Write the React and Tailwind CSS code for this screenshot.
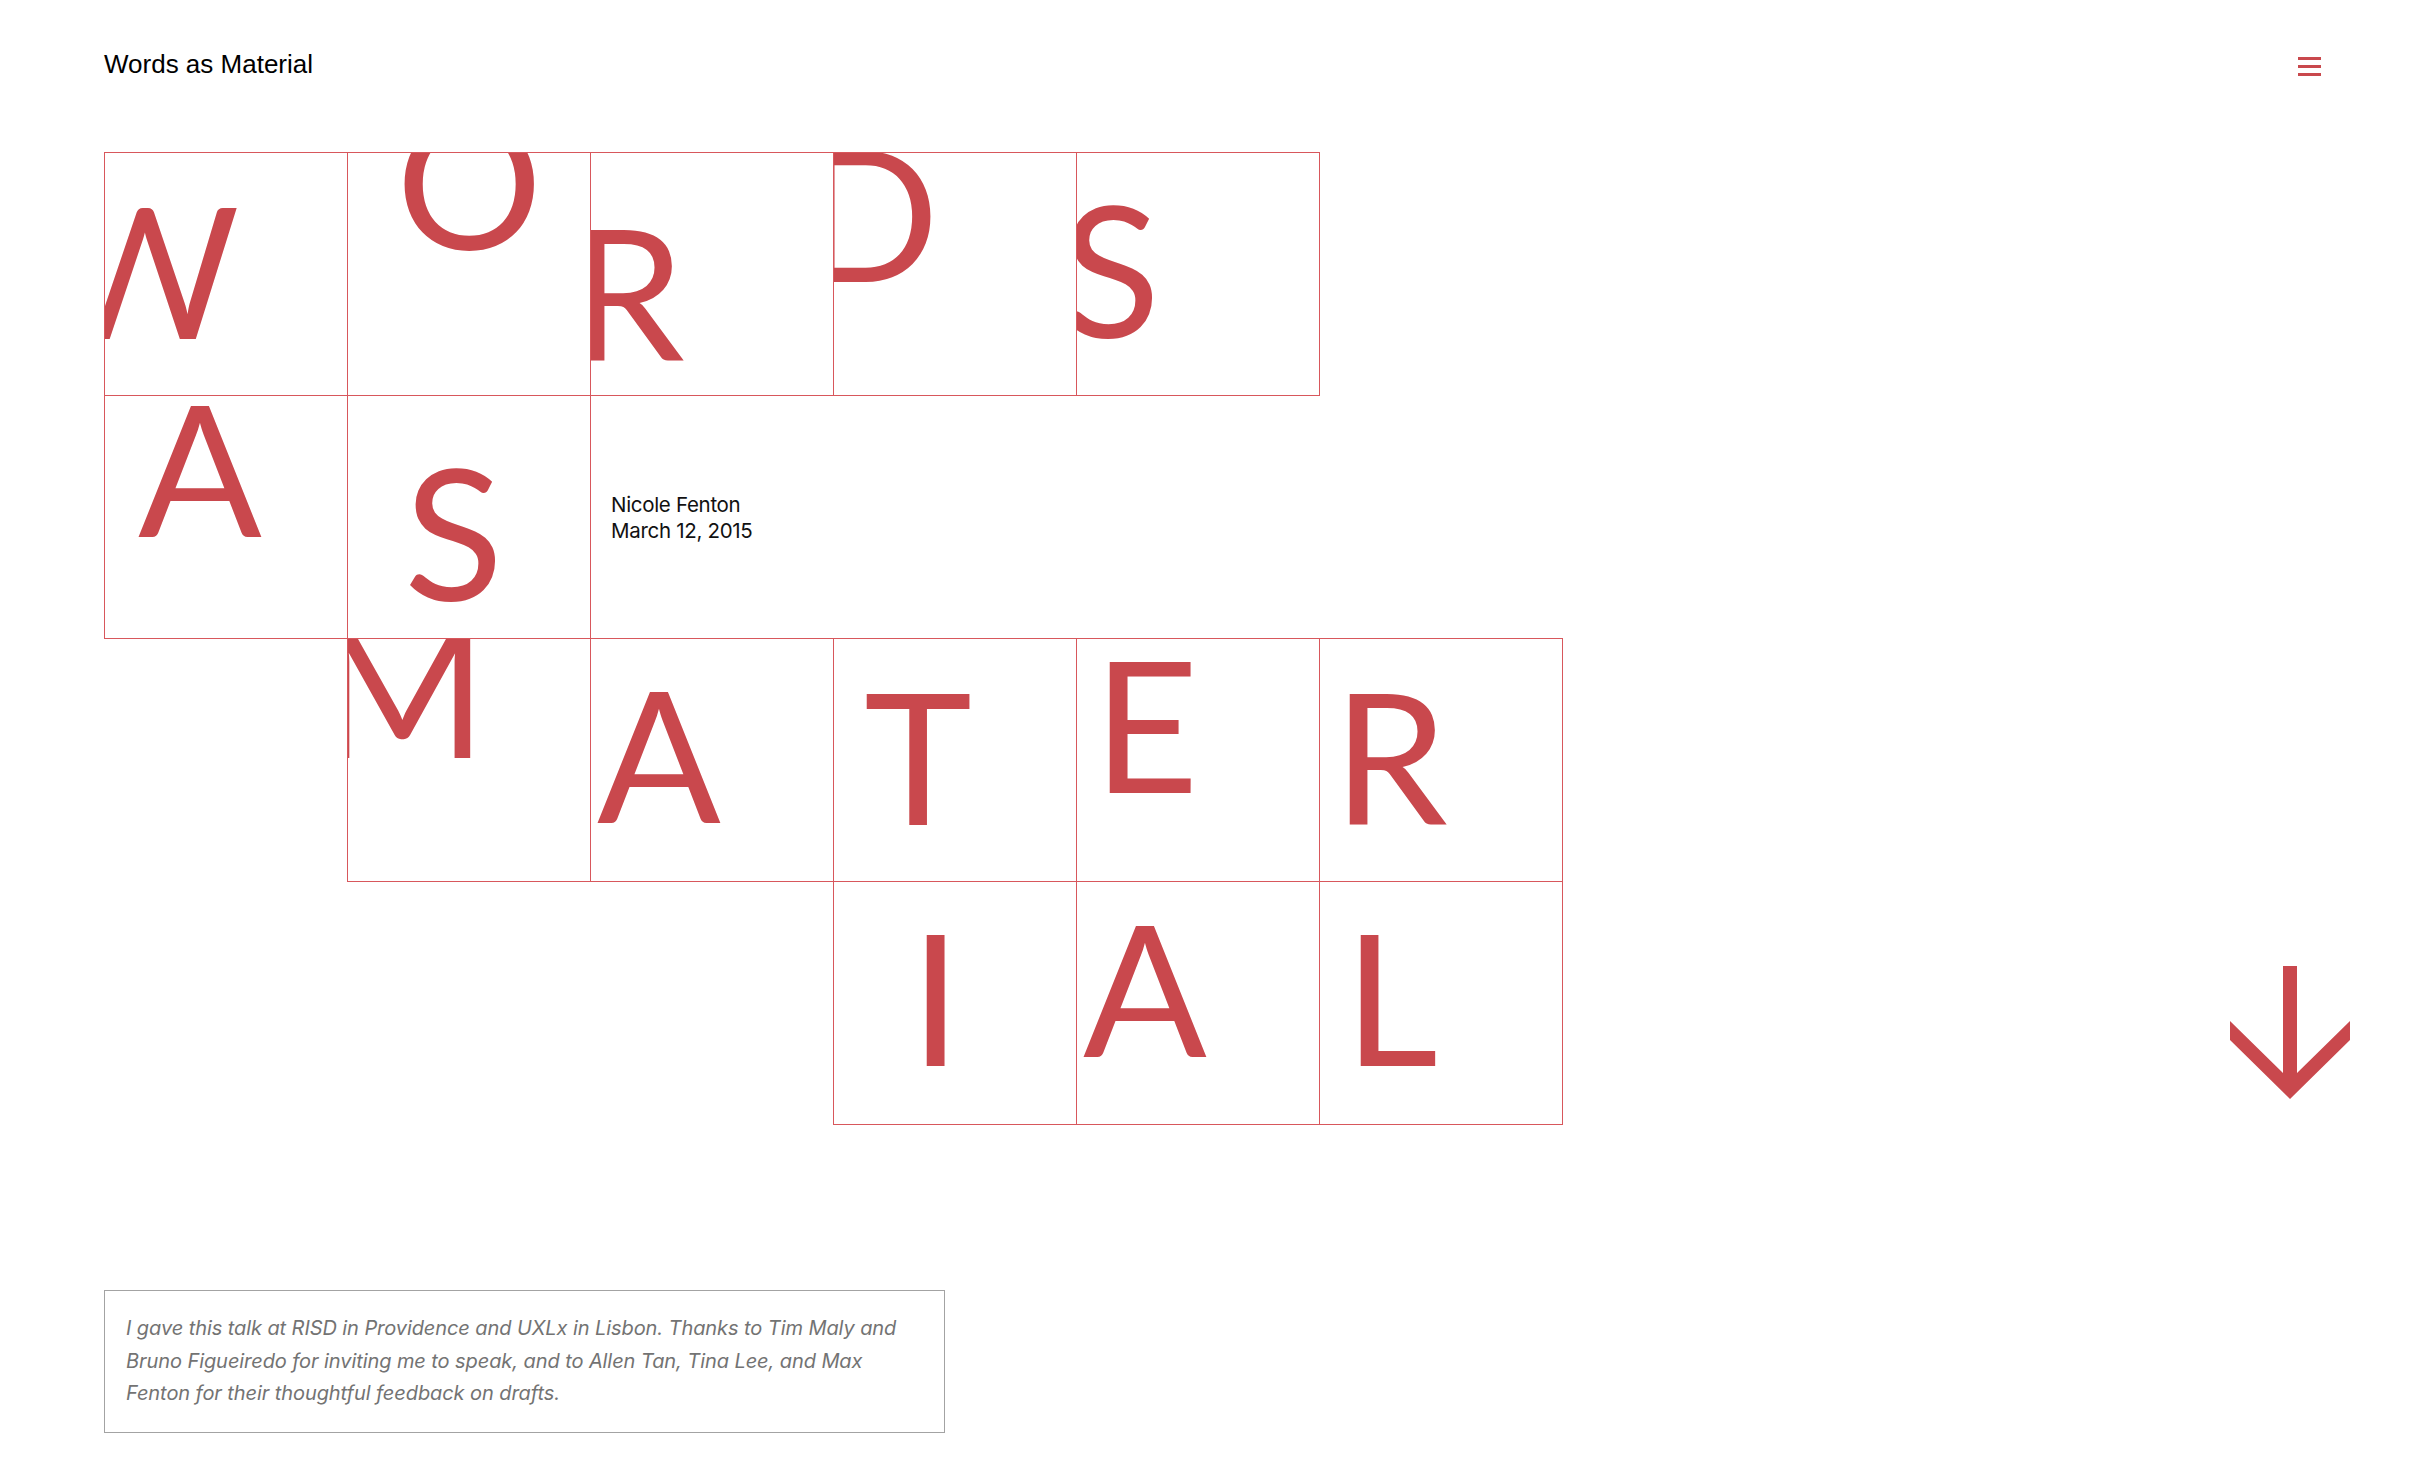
import React from 'react';

const letters = [
  // row 1 — WORDS
  { ch: 'W', cell: 'col-start-1 row-start-1', pos: 'left-[-55px] top-[24px]' },
  { ch: 'O', cell: 'col-start-2 row-start-1', pos: 'left-[48px] top-[-65px]' },
  { ch: 'R', cell: 'col-start-3 row-start-1', pos: 'left-[-21px] top-[46px]' },
  { ch: 'D', cell: 'col-start-4 row-start-1', pos: 'left-[-34px] top-[-33px]' },
  { ch: 'S', cell: 'col-start-5 row-start-1', pos: 'left-[-16px] top-[23px]' },
  // row 2 — AS
  { ch: 'A', cell: 'col-start-1 row-start-2', pos: 'left-[33px] top-[-21px]' },
  { ch: 'S', cell: 'col-start-2 row-start-2', pos: 'left-[56px] top-[43px]' },
  // row 3 — MATER
  { ch: 'M', cell: 'col-start-2 row-start-3', pos: 'left-[-31px] top-[-43px]' },
  { ch: 'A', cell: 'col-start-3 row-start-3', pos: 'left-[6px] top-[22px]' },
  { ch: 'T', cell: 'col-start-4 row-start-3', pos: 'left-[30px] top-[24px]' },
  { ch: 'E', cell: 'col-start-5 row-start-3', pos: 'left-[16px] top-[-8px]' },
  { ch: 'R', cell: 'col-start-6 row-start-3', pos: 'left-[13px] top-[24px]' },
  // row 4 — IAL
  { ch: 'I', cell: 'col-start-4 row-start-4', pos: 'left-[76px] top-[22px]' },
  { ch: 'A', cell: 'col-start-5 row-start-4', pos: 'left-[6px] top-[13px]' },
  { ch: 'L', cell: 'col-start-6 row-start-4', pos: 'left-[24px] top-[22px]' },
];

function LetterCell({ ch, cell, pos }) {
  return (
    <div className={`${cell} relative h-[244px] w-[244px] overflow-hidden border border-[#d8575c]`}>
      <span className={`absolute ${pos} select-none font-['Lato',sans-serif] text-[183px] leading-none text-[#c9484d]`}>
        {ch}
      </span>
    </div>
  );
}

function DownArrow() {
  return (
    <svg width="120" height="133" viewBox="0 0 120 133" className="mb-[25px]" aria-label="Scroll down">
      <polygon
        points="53,0 67,0 67,107 120,55 120,74 60,133 0,74 0,55 53,107"
        fill="#c9484d"
      />
    </svg>
  );
}

export default function App() {
  return (
    <div className="min-h-screen bg-white">
      <header className="flex items-start justify-between pl-[104px] pr-[105px] pt-[49px]">
        <a href="#" className="font-['Liberation_Sans',Arial,sans-serif] text-[26px] leading-[30px] text-black">
          Words as Material
        </a>
        <button className="mt-[8px] flex flex-col gap-[5px]" aria-label="Menu">
          <span className="block h-[3px] w-[23px] bg-[#c9484d]" />
          <span className="block h-[3px] w-[23px] bg-[#c9484d]" />
          <span className="block h-[3px] w-[23px] bg-[#c9484d]" />
        </button>
      </header>

      <section className="mt-[73px] flex items-end justify-between pl-[104px] pr-[76px]">
        <div className="grid grid-cols-[repeat(6,243px)] grid-rows-[repeat(4,243px)]">
          {letters.map((l, i) => (
            <LetterCell key={i} {...l} />
          ))}
          <div className="col-start-3 row-start-2 pl-[21px] pt-[97px] font-['Inter',sans-serif] text-[20.5px] leading-[26px] tracking-[-0.015em] text-[#111]">
            <div>Nicole Fenton</div>
            <div>March 12, 2015</div>
          </div>
        </div>
        <DownArrow />
      </section>

      <aside className="ml-[104px] mt-[166px] w-[841px] border border-[#a3a3a3] pb-[22px] pl-[21px] pr-[20px] pt-[21px]">
        <p className="font-['Inter',sans-serif] text-[20px] italic leading-[32.5px] tracking-[-0.004em] text-[#737373]">
          I gave this talk at RISD in Providence and UXLx in Lisbon. Thanks to Tim Maly and
          <br />
          Bruno Figueiredo for inviting me to speak, and to Allen Tan, Tina Lee, and Max
          <br />
          Fenton for their thoughtful feedback on drafts.
        </p>
      </aside>
    </div>
  );
}
